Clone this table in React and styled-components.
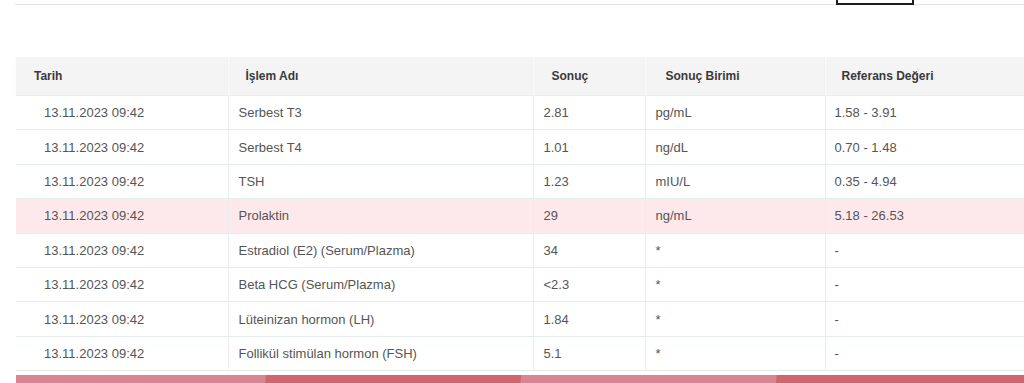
import React from "react";
import styled, { createGlobalStyle } from "styled-components";

const GlobalStyle = createGlobalStyle`
  html, body {
    margin: 0;
    padding: 0;
    background: #fff;
    overflow: hidden;
  }
  body {
    font-family: "Liberation Sans", Arial, sans-serif;
  }
`;

const Page = styled.div`
  width: 1024px;
  height: 383px;
  overflow: hidden;
  display: flex;
  flex-direction: column;
`;

const TopBar = styled.div`
  height: 4px;
  margin-left: 15px;
  border-bottom: 1px solid #e4e4e4;
  display: flex;
  justify-content: flex-end;
  padding-right: 110px;
`;

const TopButton = styled.div`
  width: 78px;
  height: 5px;
  box-sizing: border-box;
  border: 2px solid #1e1e1e;
  border-top: none;
`;

const TableWrap = styled.div`
  margin: 52px 0 0 16px;
  width: 1040px;
`;

const Table = styled.table`
  width: 100%;
  border-collapse: collapse;
  table-layout: fixed;
  border-bottom: 1px solid #e2eaea;
`;

const Th = styled.th`
  height: 38px;
  padding: 0 0 0 ${(p) => p.$pad || 18}px;
  background: #f4f4f4;
  border-right: 1px solid #f9f9f9;
  border-bottom: 1px solid #ececec;
  text-align: left;
  font-size: 12px;
  font-weight: bold;
  color: #3a3a3a;
  box-shadow: 0 1px 2px rgba(0, 0, 0, 0.04);
`;

const Row = styled.tr`
  height: 34.4px;
  background: ${(p) => (p.$alert ? "#fde9eb" : "#fff")};
`;

const Td = styled.td`
  padding: 0 0 0 ${(p) => p.$pad || 10}px;
  border-top: 1px solid #e6eded;
  border-right: 1px solid #e9eded;
  font-size: 13px;
  color: #555;
  white-space: nowrap;
  overflow: hidden;
`;

const Strip = styled.div`
  margin: 4px 0 0 16px;
  height: 10px;
  width: 1020px;
  background: linear-gradient(
    96deg,
    #d98592 0,
    #d98592 248px,
    #d0656f 249px,
    #d0656f 502px,
    #d98592 503px,
    #d98592 756px,
    #d0656f 757px,
    #d0656f 100%
  );
`;

const rows = [
  ["Serbest T3", "2.81", "pg/mL", "1.58 - 3.91"],
  ["Serbest T4", "1.01", "ng/dL", "0.70 - 1.48"],
  ["TSH", "1.23", "mIU/L", "0.35 - 4.94"],
  ["Prolaktin", "29", "ng/mL", "5.18 - 26.53", true],
  ["Estradiol (E2) (Serum/Plazma)", "34", "*", "-"],
  ["Beta HCG (Serum/Plazma)", "<2.3", "*", "-"],
  ["Lüteinizan hormon (LH)", "1.84", "*", "-"],
  ["Follikül stimülan hormon (FSH)", "5.1", "*", "-"],
];

const App = () => {
  return (
    <Page>
      <GlobalStyle />
      <TopBar>
        <TopButton />
      </TopBar>
      <TableWrap>
        <Table>
          <colgroup>
            <col style={{ width: 212 }} />
            <col style={{ width: 305 }} />
            <col style={{ width: 112 }} />
            <col style={{ width: 180 }} />
            <col />
          </colgroup>
          <thead>
            <tr>
              <Th>Tarih</Th>
              <Th $pad={17}>İşlem Adı</Th>
              <Th>Sonuç</Th>
              <Th $pad={20}>Sonuç Birimi</Th>
              <Th $pad={16}>Referans Değeri</Th>
            </tr>
          </thead>
          <tbody>
            {rows.map(([name, result, unit, ref, alert], i) => (
              <Row key={i} $alert={alert}>
                <Td $pad={28}>13.11.2023 09:42</Td>
                <Td>{name}</Td>
                <Td>{result}</Td>
                <Td>{unit}</Td>
                <Td $pad={9}>{ref}</Td>
              </Row>
            ))}
          </tbody>
        </Table>
      </TableWrap>
      <Strip />
    </Page>
  );
};

export default App;
